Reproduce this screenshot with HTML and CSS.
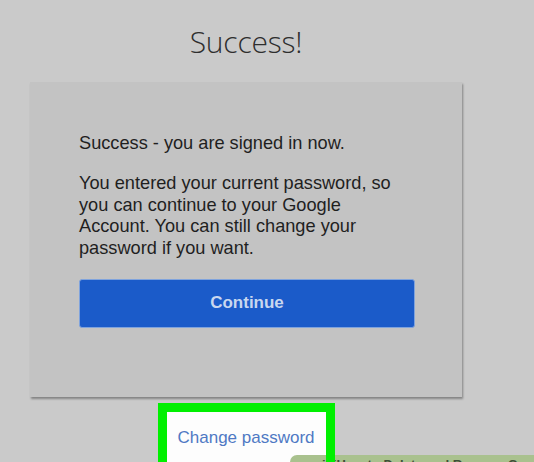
FILE: index.html
```html
<!DOCTYPE html>
<html lang="en">
<head>
<meta charset="utf-8">
<title>Success!</title>
<link rel="stylesheet" href="styles.css">
</head>
<body>
<main class="page">
  <h1 class="title">Success!</h1>
  <section class="card">
    <p class="lead">Success - you are signed in now.</p>
    <p class="body">You entered your current password, so you can continue to your Google Account. You can still change your password if you want.</p>
    <button class="continue" type="button">Continue</button>
  </section>
  <div class="highlight">
    <a class="change" href="#">Change password</a>
  </div>
</main>
<div class="watermark">wikiHow to Delete and Recover Gmail</div>
</body>
</html>
```
FILE: styles.css
```css
html, body {
  margin: 0;
  padding: 0;
  width: 534px;
  height: 462px;
  overflow: hidden;
  background: #cacaca;
}

.page {
  width: 432px;
  margin-left: 30px;
  display: flex;
  flex-direction: column;
  align-items: center;
}

.title {
  margin: 21px 0 0;
  height: 61px;
  font-family: "Open Sans", "Noto Sans", sans-serif;
  font-weight: 300;
  font-size: 30px;
  line-height: 41px;
  color: #2e2e2e;
  letter-spacing: -0.2px;
}

.card {
  box-sizing: border-box;
  width: 432px;
  height: 315px;
  padding: 51px 47px 0 49px;
  background: #c3c3c3;
  box-shadow: 1px 2px 2px rgba(0, 0, 0, 0.35);
  font-family: "Liberation Sans", Arial, sans-serif;
  color: #1f1f1f;
}

.lead,
.body {
  margin: 0;
  font-size: 18.2px;
  line-height: 21.7px;
}

.lead {
  margin-bottom: 18.3px;
}

.body {
  width: 320px;
}

.continue {
  display: block;
  box-sizing: border-box;
  width: 336px;
  height: 49px;
  margin-top: 19px;
  padding: 0;
  border: 1px solid #7fa3dd;
  border-radius: 3px;
  background: #1b5bc9;
  font-family: "Liberation Sans", Arial, sans-serif;
  font-weight: bold;
  font-size: 17px;
  color: #c9d7ef;
}

.highlight {
  position: relative;
  margin-top: 6px;
  width: 177px;
  height: 70px;
  box-sizing: border-box;
  padding: 9px;
}

.highlight::before {
  content: "";
  position: absolute;
  inset: 9px;
  background: #fdfdfd;
}

.highlight::after {
  content: "";
  position: absolute;
  inset: 0;
  border: 9px solid #00f000;
  z-index: 3;
}

.change {
  position: relative;
  z-index: 1;
  display: block;
  padding: 16px 0 0 11px;
  font-family: "Liberation Sans", Arial, sans-serif;
  font-size: 17px;
  line-height: 19px;
  color: #4f79c4;
  text-decoration: none;
}

.watermark {
  position: absolute;
  left: 290px;
  top: 455px;
  width: 244px;
  height: 7px;
  padding-left: 22px;
  box-sizing: border-box;
  background: #a9c18e;
  border-top-left-radius: 10px;
  z-index: 2;
  font-family: "Liberation Sans", Arial, sans-serif;
  font-weight: bold;
  font-size: 13px;
  line-height: 20px;
  color: #3f4f36;
  white-space: nowrap;
  overflow: hidden;
}
```
